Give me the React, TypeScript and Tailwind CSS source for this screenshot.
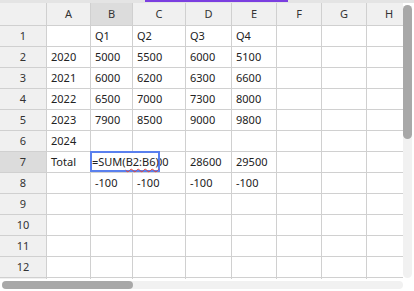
import React from 'react'

const columns = [
  { label: 'A', width: 'w-[44px]' },
  { label: 'B', width: 'w-[42px]' },
  { label: 'C', width: 'w-[53px]' },
  { label: 'D', width: 'w-[46px]' },
  { label: 'E', width: 'w-[45px]' },
  { label: 'F', width: 'w-[45px]' },
  { label: 'G', width: 'w-[45px]' },
  { label: 'H', width: 'w-[45px]' },
  { label: 'I', width: 'w-[45px]' },
]

const data: string[][] = [
  ['', 'Q1', 'Q2', 'Q3', 'Q4'],
  ['2020', '5000', '5500', '6000', '5100'],
  ['2021', '6000', '6200', '6300', '6600'],
  ['2022', '6500', '7000', '7300', '8000'],
  ['2023', '7900', '8500', '9000', '9800'],
  ['2024'],
  ['Total', '25400', '27200', '28600', '29500'],
  ['', '-100', '-100', '-100', '-100'],
  [],
  [],
  [],
  [],
  [],
]

const selCol = 1
const selRow = 6

function CellEditor() {
  return (
    <div className="absolute left-[-1px] top-[-1px] z-10 w-[70px] h-[21px] border-2 border-[#5a80ee] bg-white flex items-center">
      <span className="whitespace-nowrap leading-none text-[#222]">
        =SUM(
        <span className="underline decoration-wavy decoration-[#e0413a] decoration-1 underline-offset-[2px]">B2:B6)</span>
      </span>
      <span className="w-px h-[14px] bg-[#222] ml-[2px]" />
    </div>
  )
}

function Grid() {
  return (
    <div className="flex-1 min-w-0 overflow-hidden">
      <div className="flex h-[23px] bg-[#f0f0f0] text-[#333] w-max">
        <div className="w-[47px] shrink-0 border-r border-b border-[#d0d0d0]" />
        {columns.map((c, i) => (
          <div
            key={c.label}
            className={`${c.width} shrink-0 border-r border-b border-[#d0d0d0] flex items-center justify-center ${
              i === selCol ? 'bg-[#dcdcdc]' : ''
            }`}
          >
            {c.label}
          </div>
        ))}
      </div>
      {data.map((row, r) => (
        <div key={r} className="flex h-[21px] w-max">
          <div
            className={`w-[47px] shrink-0 border-r border-b border-[#d0d0d0] flex items-center justify-center text-[#333] ${
              r === selRow ? 'bg-[#dcdcdc]' : 'bg-[#f0f0f0]'
            }`}
          >
            {r + 1}
          </div>
          {columns.map((c, i) => (
            <div
              key={c.label}
              className={`${c.width} shrink-0 border-r border-b border-[#d0d0d0] flex items-center pl-1 whitespace-nowrap relative`}
            >
              {row[i] ?? ''}
              {r === selRow && i === selCol && <CellEditor />}
            </div>
          ))}
        </div>
      ))}
    </div>
  )
}

export default function App() {
  return (
    <div className="w-[414px] h-[291px] bg-white flex flex-col overflow-hidden font-['Noto_Sans',sans-serif] text-[11px] text-[#222]">
      <div className="h-[3px] shrink-0 bg-[#e4e4e4] flex">
        <div className="ml-[145px] w-[143px] h-[2px] bg-[#7b3fe0]" />
      </div>
      <div className="flex flex-1 min-h-0">
        <Grid />
        <div className="w-[11px] shrink-0 pt-[2px] pb-px">
          <div className="w-[9px] h-full bg-[#f1f1f1] rounded-full">
            <div className="w-[9px] h-[134px] bg-[#a8a8a8] rounded-full" />
          </div>
        </div>
      </div>
      <div className="h-[12px] shrink-0 flex items-center pl-[2px] pr-[11px]">
        <div className="flex-1 h-[8px] bg-[#f1f1f1] rounded-full">
          <div className="w-[131px] h-[8px] bg-[#a8a8a8] rounded-full" />
        </div>
      </div>
    </div>
  )
}
